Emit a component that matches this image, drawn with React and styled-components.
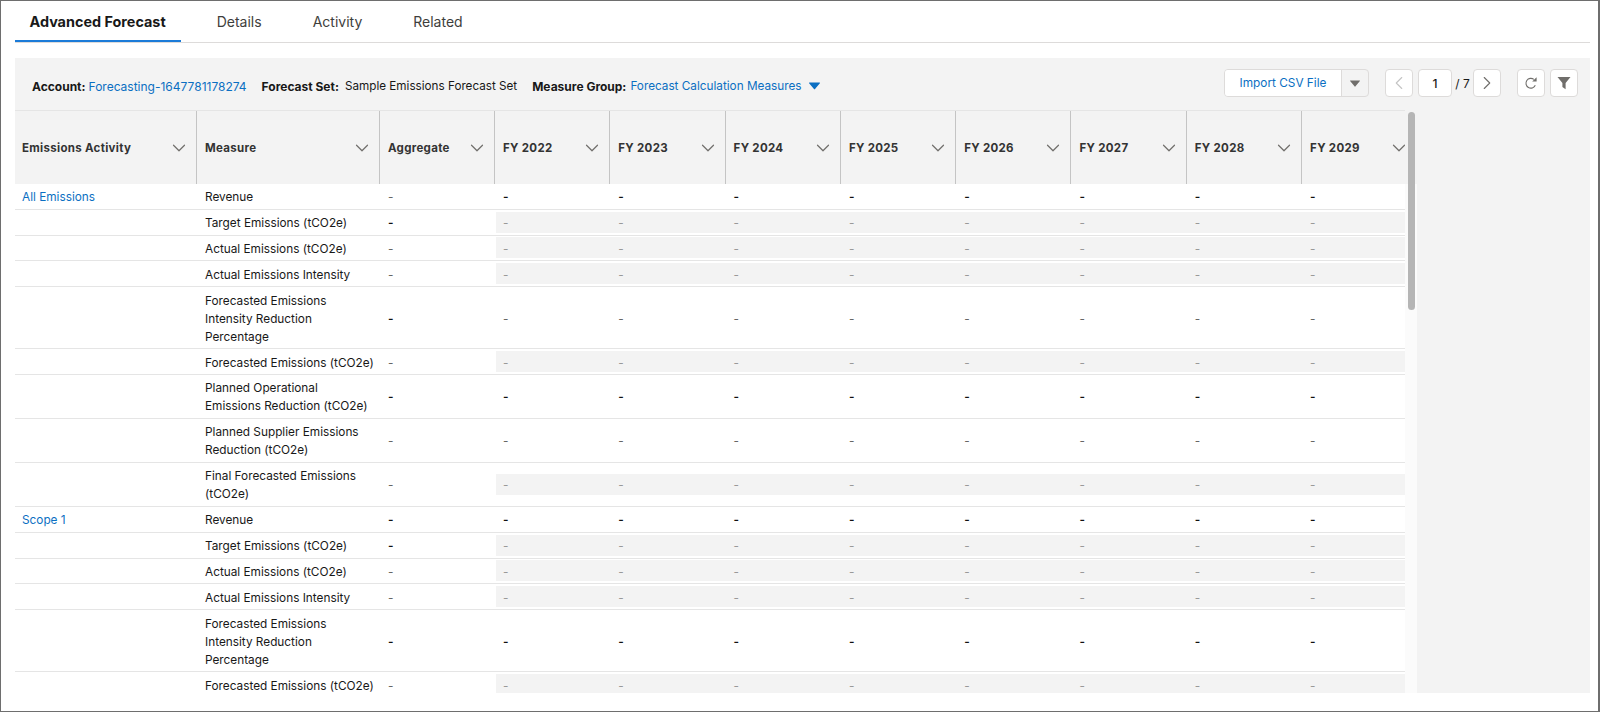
import styled, { createGlobalStyle } from "styled-components"
import { ChevronDown, ChevronLeft, ChevronRight } from "lucide-react"

const Global = createGlobalStyle`
html,body{
    margin: 0;
    padding: 0;
    background: white;
    font-family: Inter, "Liberation Sans", sans-serif;
    color: #181818;
}
*{
    box-sizing: border-box;
}
`

const years = ["FY 2022", "FY 2023", "FY 2024", "FY 2025", "FY 2026", "FY 2027", "FY 2028", "FY 2029"]

const block = (name, strongAll) => [
    { activity: name, measure: ["Revenue"], aggStrong: strongAll, strong: true },
    { measure: ["Target Emissions (tCO2e)"], aggStrong: true, grey: true },
    { measure: ["Actual Emissions (tCO2e)"], aggStrong: false, grey: true },
    { measure: ["Actual Emissions Intensity"], aggStrong: false, grey: true },
    { measure: ["Forecasted Emissions", "Intensity Reduction", "Percentage"], aggStrong: true, strong: strongAll },
    { measure: ["Forecasted Emissions (tCO2e)"], aggStrong: false, grey: true },
    { measure: ["Planned Operational", "Emissions Reduction (tCO2e)"], aggStrong: true, strong: true },
    { measure: ["Planned Supplier Emissions", "Reduction (tCO2e)"], aggStrong: false },
    { measure: ["Final Forecasted Emissions", "(tCO2e)"], aggStrong: false, grey: true },
]

// the rest of the second block is scrolled out of view
const rows = [...block("All Emissions", false), ...block("Scope 1", true).slice(0, 6)]

function Caret({ color, size }) {
    return (
        <svg width={size} height={size * 0.7} viewBox="0 0 10 7">
            <path d="M0.4 0.4h9.2a.4.4 0 0 1 .3.65L5.3 6.5a.4.4 0 0 1-.6 0L.1 1.05A.4.4 0 0 1 .4.4z" fill={color} />
        </svg>
    )
}

function RefreshIcon() {
    return (
        <svg width="14" height="14" viewBox="0 0 14 14" fill="none" stroke="#706e6b" strokeWidth="1.1">
            <path d="M11.3 9.3A4.9 4.9 0 1 1 9.9 3.4" />
            <path d="M12.6 1.2v4.4H8.2z" fill="#706e6b" stroke="none" />
        </svg>
    )
}

function FilterIcon() {
    return (
        <svg width="14" height="14" viewBox="0 0 14 14">
            <path d="M0.5 1h13L8.6 7v6.2L5.4 11V7z" fill="#706e6b" />
        </svg>
    )
}

function SortIcon() {
    return <ChevronDown size={22} color="#706e6b" strokeWidth={1.3} />
}

function Header() {
    return (
        <HeadRow>
            <HeadCell $w={182} $pad={7}>Emissions Activity<SortIcon /></HeadCell>
            <HeadCell $w={183} $pad={8}>Measure<SortIcon /></HeadCell>
            <HeadCell $w={115} $pad={8}>Aggregate<SortIcon /></HeadCell>
            {years.map((y) => (
                <HeadCell key={y} $w={115.3} $pad={8}>{y}<SortIcon /></HeadCell>
            ))}
        </HeadRow>
    )
}

export default function App() {
    return (
        <>
            <Global />
            <Frame>
                <Tabs>
                    <Tab $active>Advanced Forecast</Tab>
                    <Tab>Details</Tab>
                    <Tab>Activity</Tab>
                    <Tab>Related</Tab>
                </Tabs>
                <Panel>
                    <Toolbar>
                        <Info>
                            <Pair $gap={3}><b>Account:</b><ToolLink>Forecasting-1647781178274</ToolLink></Pair>
                            <Pair $gap={6}><b>Forecast Set:</b><Plain>Sample Emissions Forecast Set</Plain></Pair>
                            <Pair>
                                <b>Measure Group:</b>
                                <GroupLink>Forecast Calculation Measures</GroupLink>
                                <CaretWrap><Caret color="#0b6fc2" size={11} /></CaretWrap>
                            </Pair>
                        </Info>
                        <Controls>
                            <SplitButton>
                                <ImportBtn>Import CSV File</ImportBtn>
                                <CaretBtn><Caret color="#706e6b" size={10} /></CaretBtn>
                            </SplitButton>
                            <Pager>
                                <IconBtn><ChevronLeft size={22} color="#c4c4c4" strokeWidth={1.2} /></IconBtn>
                                <PageInput>1</PageInput>
                                <PageTotal>/ 7</PageTotal>
                                <IconBtn><ChevronRight size={22} color="#706e6b" strokeWidth={1.2} /></IconBtn>
                            </Pager>
                            <Tools>
                                <IconBtn><RefreshIcon /></IconBtn>
                                <IconBtn><FilterIcon /></IconBtn>
                            </Tools>
                        </Controls>
                    </Toolbar>
                    <TableArea>
                        <Grid>
                            <Header />
                            <Body>
                                {rows.map((r, i) => (
                                    <Row key={i} $lines={r.measure.length}>
                                        <Activity>{r.activity ? <Link>{r.activity}</Link> : null}</Activity>
                                        <Measure>
                                            {r.measure.map((m) => <div key={m}>{m}</div>)}
                                        </Measure>
                                        <Aggregate><Dash $strong={r.aggStrong}>-</Dash></Aggregate>
                                        <Values $grey={r.grey}>
                                            {years.map((y) => (
                                                <Value key={y}><Dash $strong={r.strong} $grey={r.grey}>-</Dash></Value>
                                            ))}
                                        </Values>
                                    </Row>
                                ))}
                            </Body>
                        </Grid>
                        <ScrollTrack>
                            <TrackHead />
                            <Thumb />
                        </ScrollTrack>
                    </TableArea>
                </Panel>
            </Frame>
        </>
    )
}

const Frame = styled.div`
width: 1600px;
height: 712px;
overflow: hidden;
border-style: solid;
border-color: #6e6e6e;
border-width: 1px 2px 1px 1px;
padding: 0 8px 18px 14px;
display: flex;
flex-direction: column;
`

const Tabs = styled.div`
display: flex;
gap: 21px;
height: 42px;
flex-shrink: 0;
border-bottom: 1px solid #dddbda;
margin-bottom: 15px;
`

const Tab = styled.div`
height: 41px;
padding: 2px 15px 0 ${(p) => (p.$active ? 14.5 : 15)}px;
display: flex;
align-items: center;
font-size: ${(p) => (p.$active ? 14.4 : 14)}px;
font-weight: ${(p) => (p.$active ? 700 : 400)};
color: ${(p) => (p.$active ? "#181818" : "#3e3e3c")};
border-bottom: 2px solid ${(p) => (p.$active ? "#1b7bd8" : "transparent")};
`

const Panel = styled.div`
flex: 1;
min-height: 0;
background: #f3f3f3;
display: flex;
flex-direction: column;
`

const Toolbar = styled.div`
height: 52px;
flex-shrink: 0;
display: flex;
justify-content: space-between;
padding: 11px 12px 0 17px;
`

const Info = styled.div`
display: flex;
gap: 15px;
height: 28px;
padding-top: 6px;
align-items: center;
font-size: 12px;
`

const Pair = styled.div`
display: flex;
align-items: center;
gap: ${(p) => p.$gap || 4}px;
b{
    font-weight: 700;
}
`

const Link = styled.span`
color: #0b6fc2;
font-size: 11.8px;
`

const ToolLink = styled(Link)`
font-size: 12px;
`

const GroupLink = styled(Link)`
font-size: 11.75px;
`

const Plain = styled.span`
font-size: 11.7px;
`

const CaretWrap = styled.span`
display: flex;
margin-left: 4px;
`

const Controls = styled.div`
display: flex;
align-items: flex-start;
`

const SplitButton = styled.div`
display: flex;
height: 28px;
border: 1px solid #dddbda;
border-radius: 4px;
overflow: hidden;
margin-right: 16px;
`

const ImportBtn = styled.div`
width: 116px;
background: white;
color: #0b6fc2;
font-size: 11.8px;
display: flex;
align-items: center;
justify-content: center;
`

const CaretBtn = styled.div`
width: 27px;
border-left: 1px solid #dddbda;
display: flex;
align-items: center;
justify-content: center;
`

const Pager = styled.div`
display: flex;
align-items: center;
margin-right: 16px;
`

const IconBtn = styled.div`
width: 28px;
height: 28px;
background: white;
border: 1px solid #dddbda;
border-radius: 4px;
display: flex;
align-items: center;
justify-content: center;
`

const PageInput = styled.div`
width: 34px;
height: 28px;
margin-left: 5px;
background: white;
border: 1px solid #dddbda;
border-radius: 4px;
font-size: 12px;
font-weight: 500;
display: flex;
align-items: center;
justify-content: center;
`

const PageTotal = styled.div`
width: 21px;
text-align: center;
font-size: 12px;
`

const Tools = styled.div`
display: flex;
gap: 5px;
`

const TableArea = styled.div`
flex: 1;
min-height: 0;
display: flex;
`

const Grid = styled.div`
width: 1390px;
flex-shrink: 0;
overflow: hidden;
display: flex;
flex-direction: column;
`

const HeadRow = styled.div`
display: flex;
height: 74px;
flex-shrink: 0;
border-top: 1px solid #e5e5e5;
`

const HeadCell = styled.div`
width: ${(p) => p.$w}px;
flex-shrink: 0;
padding: 0 6px 0 ${(p) => p.$pad}px;
display: flex;
align-items: center;
justify-content: space-between;
border-right: 1px solid #c4c4c4;
font-size: 11.5px;
font-weight: 700;
letter-spacing: 0.3px;
color: #333;
`

const Body = styled.div`
flex: 1;
min-height: 0;
background: white;
overflow: hidden;
`

const Row = styled.div`
display: flex;
align-items: center;
height: ${(p) => (p.$lines === 1 ? 25.8 : p.$lines === 2 ? 44 : 62)}px;
border-bottom: 1px solid #e5e5e5;
font-size: 11.8px;
line-height: 18px;
`

const Activity = styled.div`
width: 182px;
flex-shrink: 0;
padding: 2px 0 0 7px;
`

const Measure = styled.div`
width: 183px;
flex-shrink: 0;
padding: 2px 0 0 8px;
white-space: nowrap;
`

const Aggregate = styled.div`
width: 115px;
flex-shrink: 0;
padding: 2px 0 0 8px;
`

const Values = styled.div`
flex: 1;
height: 21px;
margin-left: 1px;
display: flex;
align-items: center;
background: ${(p) => (p.$grey ? "#f3f3f3" : "transparent")};
`

const Value = styled.div`
width: 115.3px;
flex-shrink: 0;
padding: 2px 0 0 7px;
`

const Dash = styled.span`
color: ${(p) => (p.$strong ? "#111" : p.$grey ? "#999" : "#666")};
font-weight: ${(p) => (p.$strong ? 600 : 400)};
`

const ScrollTrack = styled.div`
position: relative;
width: 12px;
flex-shrink: 0;
background: #fbfbfb;
`

const TrackHead = styled.div`
height: 74px;
background: #f3f3f3;
`

const Thumb = styled.div`
position: absolute;
top: 2px;
left: 3px;
width: 7px;
height: 198px;
border-radius: 4px;
background: #b5b5b5;
`
